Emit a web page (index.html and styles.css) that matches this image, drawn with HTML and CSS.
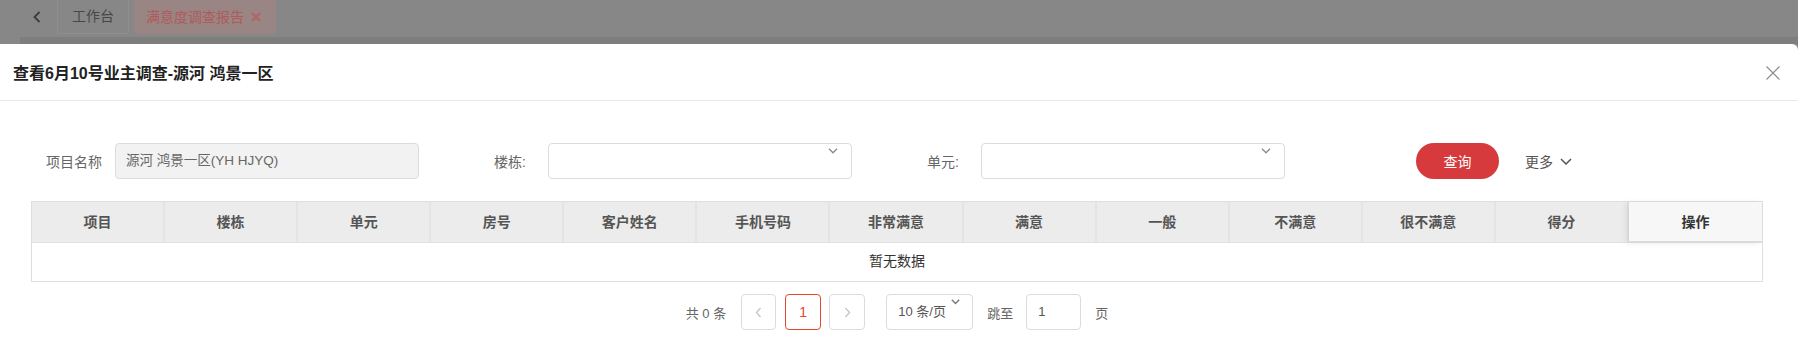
FILE: index.html
```html
<!DOCTYPE html>
<html lang="zh-CN">
<head>
    <meta charset="UTF-8">
    <meta name="viewport" content="width=device-width, initial-scale=1.0">
    <title>满意度调查报告</title>
    <link rel="stylesheet" href="styles.css">
</head>
<body>
    <div class="topbar">
        <span class="back-btn">
            <svg width="10" height="12" viewBox="0 0 10 12"><path d="M7.5 1 L2.5 6 L7.5 11" fill="none" stroke="#3c3c3c" stroke-width="1.8"/></svg>
        </span>
        <div class="tab">工作台</div>
        <div class="tab tab-active">
            满意度调查报告
            <svg class="tab-close" width="10" height="10" viewBox="0 0 10 10"><path d="M1 1 L9 9 M9 1 L1 9" stroke="#b46262" stroke-width="2"/></svg>
        </div>
    </div>
    <div class="page-strip"></div>

    <div class="modal">
        <div class="modal-header">
            <h3 class="modal-title">查看6月10号业主调查-源河 鸿景一区</h3>
            <span class="modal-close">
                <svg width="14" height="14" viewBox="0 0 14 14"><path d="M0.5 0.5 L13.5 13.5 M13.5 0.5 L0.5 13.5" stroke="#8c8c8c" stroke-width="1.1"/></svg>
            </span>
        </div>

        <div class="modal-body">
            <div class="search-form">
                <div class="form-item item-project">
                    <label class="form-label">项目名称</label>
                    <div class="form-input is-disabled">源河 鸿景一区(YH HJYQ)</div>
                </div>
                <div class="form-item">
                    <label class="form-label">楼栋:</label>
                    <div class="form-input form-select">
                        <svg class="select-arrow" width="10" height="6" viewBox="0 0 10 6"><path d="M1 0.8 L5 4.8 L9 0.8" fill="none" stroke="#8a8a8a" stroke-width="1.3"/></svg>
                    </div>
                </div>
                <div class="form-item">
                    <label class="form-label">单元:</label>
                    <div class="form-input form-select">
                        <svg class="select-arrow" width="10" height="6" viewBox="0 0 10 6"><path d="M1 0.8 L5 4.8 L9 0.8" fill="none" stroke="#8a8a8a" stroke-width="1.3"/></svg>
                    </div>
                </div>
                <button class="btn-query">查询</button>
                <a class="more-link">更多
                    <svg width="12" height="7" viewBox="0 0 12 7"><path d="M1 1 L6 6 L11 1" fill="none" stroke="#555" stroke-width="1.5"/></svg>
                </a>
            </div>

            <div class="data-table">
                <div class="table-head">
                    <div class="th">项目</div>
                    <div class="th">楼栋</div>
                    <div class="th">单元</div>
                    <div class="th">房号</div>
                    <div class="th">客户姓名</div>
                    <div class="th">手机号码</div>
                    <div class="th">非常满意</div>
                    <div class="th">满意</div>
                    <div class="th">一般</div>
                    <div class="th">不满意</div>
                    <div class="th">很不满意</div>
                    <div class="th">得分</div>
                    <div class="th th-fixed">操作</div>
                </div>
                <div class="table-empty">暂无数据</div>
            </div>

            <div class="pagination">
                <span class="page-total">共 0 条</span>
                <span class="page-btn page-prev">
                    <svg width="7" height="11" viewBox="0 0 7 11"><path d="M5.5 1 L1.5 5.5 L5.5 10" fill="none" stroke="#c4c4c4" stroke-width="1.3"/></svg>
                </span>
                <span class="page-btn page-num active">1</span>
                <span class="page-btn page-next">
                    <svg width="7" height="11" viewBox="0 0 7 11"><path d="M1.5 1 L5.5 5.5 L1.5 10" fill="none" stroke="#c4c4c4" stroke-width="1.3"/></svg>
                </span>
                <span class="page-size">10 条/页
                    <svg class="size-arrow" width="9" height="6" viewBox="0 0 9 6"><path d="M0.8 0.8 L4.5 4.5 L8.2 0.8" fill="none" stroke="#777" stroke-width="1.4"/></svg>
                </span>
                <span class="page-jump">跳至</span>
                <span class="page-input">1</span>
                <span class="page-unit">页</span>
            </div>
        </div>
    </div>
</body>
</html>
```

FILE: styles.css
```css
* {
    box-sizing: border-box;
}

body {
    margin: 0;
    width: 1798px;
    height: 364px;
    overflow: hidden;
    background-color: #878787; /* page behind the mask */
    font-family: "Liberation Sans", "Noto Sans CJK SC", sans-serif;
    font-size: 14px;
    color: #333;
}

/* dimmed top navigation */
.topbar {
    height: 37px;
    display: flex;
    align-items: flex-start;
    background-color: #878787;
}

.back-btn {
    display: flex;
    align-items: center;
    height: 34px;
    margin-left: 32px;
    margin-right: 15px;
}

.tab {
    height: 34px;
    line-height: 32px;
    padding: 0 14px;
    border: 1px solid #8f8f8f;
    border-top: none;
    border-radius: 0 0 4px 4px;
    color: #474747;
}

.tab-active {
    display: flex;
    align-items: center;
    gap: 7px;
    margin-left: 5px;
    padding: 0 14px 0 11px;
    background-color: #9a8585;
    border-color: #9a8585;
    color: #b05a5a;
}

.page-strip {
    height: 7px;
    margin-left: 20px;
    background-color: #7e7e7e;
}

/* modal */
.modal {
    height: 320px;
    background-color: #fff;
    border-radius: 0 6px 0 0;
}

.modal-header {
    height: 57px;
    display: flex;
    align-items: center;
    justify-content: space-between;
    padding: 0 18px 0 13px;
    border-bottom: 1px solid #e8e8e8;
}

.modal-title {
    margin: 0;
    font-size: 16px;
    font-weight: bold;
    color: #222;
}

.modal-close {
    display: flex;
    margin-top: 2px;
}

.modal-body {
    padding-top: 42px;
}

/* search form */
.search-form {
    display: flex;
    align-items: center;
    height: 36px;
    padding-left: 31px;
}

.form-item {
    display: flex;
    align-items: center;
}

.form-label {
    width: 129px;
    padding-right: 22px;
    text-align: right;
    color: #666;
}

.item-project .form-label {
    width: 84px;
    padding-right: 13px;
}

.form-input {
    position: relative;
    width: 304px;
    height: 36px;
    line-height: 34px;
    padding-left: 10px;
    border: 1px solid #dcdcdc;
    border-radius: 4px;
    font-size: 13.5px;
    color: #666;
}

.form-input.is-disabled {
    background-color: #f2f2f2;
}

.select-arrow {
    position: absolute;
    top: 4px;
    right: 13px;
}

.btn-query {
    margin-left: 131px;
    width: 83px;
    height: 36px;
    border: none;
    border-radius: 18px;
    background-color: #d63a3c;
    color: #fff;
    font-family: inherit;
    font-size: 14px;
}

.more-link {
    display: flex;
    align-items: center;
    gap: 7px;
    margin-left: 26px;
    color: #555;
}

/* table */
.data-table {
    margin: 22px 35px 0 31px;
    border: 1px solid #dedede;
}

.table-head {
    display: grid;
    grid-template-columns: repeat(13, 1fr);
    background-color: #ececec;
    border-bottom: 1px solid #e2e2e2;
}

.th {
    height: 40px;
    line-height: 40px;
    text-align: center;
    font-weight: bold;
    color: #555;
    border-right: 2px solid #e4e4e4;
}

.th-fixed {
    position: relative;
    height: 40px;
    background-color: #f7f7f7;
    color: #333;
    border-right: none;
    border-bottom: 1px solid #dcdcdc;
    box-shadow: -3px 1px 6px rgba(0, 0, 0, 0.08);
}

.table-empty {
    height: 38px;
    line-height: 36px;
    text-align: center;
    color: #333;
}

/* pagination */
.pagination {
    display: flex;
    align-items: center;
    justify-content: center;
    margin: 12px 35px 0 31px;
    font-size: 13px;
    color: #666;
}

.page-total {
    margin-right: 15px;
}

.page-btn {
    display: flex;
    align-items: center;
    justify-content: center;
    width: 36px;
    height: 36px;
    border: 1px solid #dcdcdc;
    border-radius: 4px;
}

.page-prev {
    width: 35px;
    margin-right: 9px;
}

.page-num {
    margin-right: 8px;
}

.page-num.active {
    border-color: #e8452c;
    color: #e8452c;
    font-size: 14px;
}

.page-size {
    position: relative;
    width: 87px;
    height: 36px;
    line-height: 34px;
    margin-left: 21px;
    padding-left: 11px;
    border: 1px solid #dcdcdc;
    border-radius: 4px;
    color: #555;
}

.size-arrow {
    position: absolute;
    top: 4px;
    right: 12px;
}

.page-jump {
    margin: 0 13px 0 14px;
}

.page-input {
    width: 55px;
    height: 36px;
    line-height: 34px;
    padding-left: 11px;
    border: 1px solid #dcdcdc;
    border-radius: 4px;
    color: #555;
}

.page-unit {
    margin-left: 14px;
}
```
